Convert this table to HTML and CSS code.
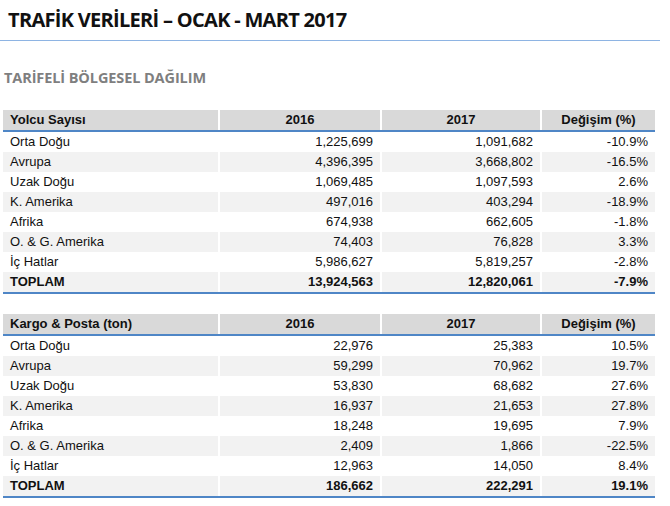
FILE: index.html
```html
<!DOCTYPE html>
<html lang="tr">
<head>
<meta charset="utf-8">
<title>Trafik Verileri</title>
<link rel="stylesheet" href="styles.css">
</head>
<body>
<div class="page">
  <h1 class="title">TRAFİK VERİLERİ – OCAK - MART 2017</h1>
  <div class="rule"></div>
  <h2 class="subtitle">TARİFELİ BÖLGESEL DAĞILIM</h2>

  <div class="tbl">
    <div class="row head">
      <div class="c name">Yolcu Sayısı</div>
      <div class="c ctr">2016</div>
      <div class="c ctr">2017</div>
      <div class="c ctr">Değişim (%)</div>
    </div>
    <div class="row"><div class="c name">Orta Doğu</div><div class="c num">1,225,699</div><div class="c num">1,091,682</div><div class="c num">-10.9%</div></div>
    <div class="row alt"><div class="c name">Avrupa</div><div class="c num">4,396,395</div><div class="c num">3,668,802</div><div class="c num">-16.5%</div></div>
    <div class="row"><div class="c name">Uzak Doğu</div><div class="c num">1,069,485</div><div class="c num">1,097,593</div><div class="c num">2.6%</div></div>
    <div class="row alt"><div class="c name">K. Amerika</div><div class="c num">497,016</div><div class="c num">403,294</div><div class="c num">-18.9%</div></div>
    <div class="row"><div class="c name">Afrika</div><div class="c num">674,938</div><div class="c num">662,605</div><div class="c num">-1.8%</div></div>
    <div class="row alt"><div class="c name">O. &amp; G. Amerika</div><div class="c num">74,403</div><div class="c num">76,828</div><div class="c num">3.3%</div></div>
    <div class="row"><div class="c name">İç Hatlar</div><div class="c num">5,986,627</div><div class="c num">5,819,257</div><div class="c num">-2.8%</div></div>
    <div class="row alt total"><div class="c name">TOPLAM</div><div class="c num">13,924,563</div><div class="c num">12,820,061</div><div class="c num">-7.9%</div></div>
  </div>

  <div class="tbl">
    <div class="row head">
      <div class="c name">Kargo &amp; Posta (ton)</div>
      <div class="c ctr">2016</div>
      <div class="c ctr">2017</div>
      <div class="c ctr">Değişim (%)</div>
    </div>
    <div class="row"><div class="c name">Orta Doğu</div><div class="c num">22,976</div><div class="c num">25,383</div><div class="c num">10.5%</div></div>
    <div class="row alt"><div class="c name">Avrupa</div><div class="c num">59,299</div><div class="c num">70,962</div><div class="c num">19.7%</div></div>
    <div class="row"><div class="c name">Uzak Doğu</div><div class="c num">53,830</div><div class="c num">68,682</div><div class="c num">27.6%</div></div>
    <div class="row alt"><div class="c name">K. Amerika</div><div class="c num">16,937</div><div class="c num">21,653</div><div class="c num">27.8%</div></div>
    <div class="row"><div class="c name">Afrika</div><div class="c num">18,248</div><div class="c num">19,695</div><div class="c num">7.9%</div></div>
    <div class="row alt"><div class="c name">O. &amp; G. Amerika</div><div class="c num">2,409</div><div class="c num">1,866</div><div class="c num">-22.5%</div></div>
    <div class="row"><div class="c name">İç Hatlar</div><div class="c num">12,963</div><div class="c num">14,050</div><div class="c num">8.4%</div></div>
    <div class="row alt total"><div class="c name">TOPLAM</div><div class="c num">186,662</div><div class="c num">222,291</div><div class="c num">19.1%</div></div>
  </div>
</div>
</body>
</html>
```

FILE: styles.css
```css
html, body {
  margin: 0;
  padding: 0;
  background: #ffffff;
}

.page {
  width: 670px;
  padding-top: 6px;
}

.title {
  margin: 0 0 0 8px;
  font-family: "Open Sans", "Liberation Sans", sans-serif;
  font-weight: 700;
  font-size: 20px;
  line-height: 27px;
  letter-spacing: -0.7px;
  color: #111111;
}

.rule {
  margin-top: 7px;
  height: 1px;
  background: #8eb4e3;
  width: 660px;
}

.subtitle {
  margin: 27px 0 0 4px;
  font-family: "Open Sans", "Liberation Sans", sans-serif;
  font-weight: 700;
  font-size: 14.5px;
  line-height: 20px;
  letter-spacing: -0.1px;
  color: #7f7f7f;
}

.tbl {
  margin: 22px 0 0 3px;
  width: 652px;
  border-bottom: 2px solid #4f86c6;
  font-family: "Liberation Sans", Arial, sans-serif;
  font-size: 13px;
  color: #111111;
}

.tbl + .tbl {
  margin-top: 20px;
}

.row {
  display: grid;
  grid-template-columns: 215px 160px 158px 113px;
  column-gap: 2px;
  height: 20px;
}

.c {
  line-height: 20px;
  padding: 0 7px;
  white-space: nowrap;
}

.row.head {
  height: 20px;
  border-bottom: 2px solid #4f86c6;
  font-weight: 700;
}

.row.head .c {
  background: #d9d9d9;
}

.row.alt .c {
  background: #f2f2f2;
}

.name {
  text-align: left;
}

.ctr {
  text-align: center;
}

.num {
  text-align: right;
}

.total {
  font-weight: 700;
}
```
